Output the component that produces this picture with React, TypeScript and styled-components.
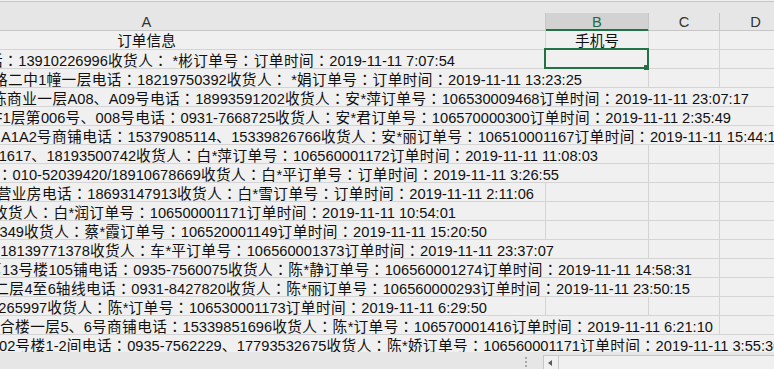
import React from "react";
import styled, { createGlobalStyle, css } from "styled-components";

const GlobalStyle = createGlobalStyle`
  html, body { margin: 0; padding: 0; background: #f0f0f0; }
  body { font-family: "Liberation Sans", "Noto Sans CJK SC", sans-serif; }
`;

const SHIFT = 252;
const COLS = "798px 103px 71px 72px 100px";
const GRID_LINE = "#d4d4d4";
const HEAD_LINE = "#c6c6c6";
const GREEN = "#217346";

const Window = styled.div`
  width: 774px;
  height: 369px;
  overflow: hidden;
  display: flex;
  flex-direction: column;
  background: #f0f0f0;
`;

const TopStrip = styled.div`
  flex: none;
  height: 11px;
  margin-top: 1px;
  border-top: 1px solid ${HEAD_LINE};
  background: #e6e6e6;
`;

const Grid = styled.div`
  display: grid;
  grid-template-columns: ${COLS};
  width: 1144px;
  margin-left: -${SHIFT}px;
`;

const ColHeaderRow = styled(Grid)`
  flex: none;
  height: 18px;
  background: #e6e6e6;
`;

const ColHeader = styled.div<{ $active?: boolean }>`
  box-sizing: border-box;
  height: 18px;
  border-right: 1px solid ${HEAD_LINE};
  border-bottom: 1px solid ${HEAD_LINE};
  display: flex;
  align-items: center;
  justify-content: center;
  font-size: 14.67px;
  line-height: 16px;
  padding-top: 1px;
  color: #333;
  ${(p) =>
    p.$active &&
    css`
      background: #d2d2d2;
      color: #1e6b41;
      border-bottom-color: ${GREEN};
      box-shadow: inset 0 -1px 0 ${GREEN};
    `}
`;

const Body = styled.div`
  flex: 1;
  min-height: 0;
  overflow: hidden;
`;

const Row = styled(Grid)`
  height: 19px;
`;

const Cell = styled.div<{ $span?: number; $selected?: boolean }>`
  box-sizing: border-box;
  height: 19px;
  border-right: 1px solid ${GRID_LINE};
  border-bottom: 1px solid ${GRID_LINE};
  grid-column: span ${(p) => p.$span ?? 1};
  ${(p) =>
    p.$selected &&
    css`
      position: relative;
    `}
`;

const TextCell = styled(Cell)`
  overflow: hidden;
  font-size: 14.67px;
  line-height: 16px;
  padding-top: 2px;
  color: #111;
`;

const TitleCell = styled(TextCell)`
  display: flex;
  justify-content: center;
  white-space: nowrap;
`;

const Overflow = styled.div<{ $end?: number; $start?: number }>`
  display: flex;
  white-space: nowrap;
  ${(p) =>
    p.$start !== undefined
      ? css`
          justify-content: flex-start;
          padding-left: ${p.$start + SHIFT}px;
        `
      : css`
          justify-content: flex-end;
          width: ${(p.$end ?? 0) + SHIFT}px;
        `}
`;

const Han = styled.span`
  letter-spacing: 0.45px;
`;

const Colon = styled.span`
  font-family: "Noto Sans CJK JP", "Noto Sans CJK SC", sans-serif;
  letter-spacing: 0.45px;
`;

const Selection = styled.div`
  position: absolute;
  left: -2px;
  top: -2px;
  right: -1px;
  bottom: -1px;
  border: 2px solid ${GREEN};
  z-index: 2;
  pointer-events: none;
`;

const FillHandle = styled.div`
  position: absolute;
  right: -2px;
  bottom: -3px;
  width: 5px;
  height: 5px;
  background: ${GREEN};
`;

const BottomBar = styled.div`
  flex: none;
  height: 17px;
  box-sizing: border-box;
  padding-top: 3px;
  background: #e6e6e6;
  display: flex;
  align-items: flex-start;
`;

const TabsArea = styled.div`
  flex: none;
  width: 525px;
`;

const Grip = styled.div`
  flex: none;
  width: 0;
  height: 10px;
  margin-top: 2px;
  border-left: 2px dotted #a8a8a8;
  margin-right: 16px;
`;

const HScroll = styled.div`
  flex: 1;
  height: 14px;
  display: flex;
  border-top: 1px solid ${HEAD_LINE};
  border-left: 1px solid ${HEAD_LINE};
  background: #f0f0f0;
`;

const ScrollButton = styled.div`
  flex: none;
  width: 14px;
  border-right: 1px solid ${HEAD_LINE};
  display: flex;
  align-items: center;
  justify-content: center;
`;

const ArrowLeft = styled.div`
  width: 0;
  height: 0;
  border-top: 3.5px solid transparent;
  border-bottom: 3.5px solid transparent;
  border-right: 4px solid #5a5a5a;
  margin-right: 2px;
`;

type RowData = { text: string; span: number; end?: number; start?: number };

const rows: RowData[] = [
  { text: "电话：13910226996收货人： *彬订单号：订单时间：2019-11-11 7:07:54", end: 455, span: 1 },
  { text: "路二中1幢一层电话：18219750392收货人： *娟订单号：订单时间：2019-11-11 13:23:25", end: 582, span: 2 },
  { text: "栋商业一层A08、A09号电话：18993591202收货人：安*萍订单号：106530009468订单时间：2019-11-11 23:07:17", end: 749, span: 4 },
  { text: "F1层第006号、008号电话：0931-7668725收货人：安*君订单号：106570000300订单时间：2019-11-11 2:35:49", end: 731, span: 4 },
  { text: "A1A2号商铺电话：15379085114、15339826766收货人：安*丽订单号：106510001167订单时间：2019-11-11 15:44:16", start: 1, span: 5 },
  { text: "1617、18193500742收货人：白*萍订单号：106560001172订单时间：2019-11-11 11:08:03", end: 598, span: 2 },
  { text: "话：010-52039420/18910678669收货人：白*平订单号：订单时间：2019-11-11 3:26:55", end: 559, span: 2 },
  { text: "营业房电话：18693147913收货人：白*雪订单号：订单时间：2019-11-11 2:11:06", end: 534, span: 1 },
  { text: "6收货人：白*润订单号：106500001171订单时间：2019-11-11 10:54:01", end: 456, span: 1 },
  { text: "1349收货人：蔡*霞订单号：106520001149订单时间：2019-11-11 15:20:50", end: 487, span: 1 },
  { text: "话：18139771378收货人：车*平订单号：106560001373订单时间：2019-11-11 23:37:07", end: 554, span: 2 },
  { text: "第13号楼105铺电话：0935-7560075收货人：陈*静订单号：106560001274订单时间：2019-11-11 14:58:31", end: 692, span: 3 },
  { text: "楼二层4至6轴线电话：0931-8427820收货人：陈*丽订单号：106560000293订单时间：2019-11-11 23:50:15", end: 690, span: 3 },
  { text: "7265997收货人：陈*订单号：106530001173订单时间：2019-11-11 6:29:50", end: 487, span: 1 },
  { text: "综合楼一层5、6号商铺电话：15339851696收货人：陈*订单号：106570001416订单时间：2019-11-11 6:21:10", end: 713, span: 3 },
  { text: "02号楼1-2间电话：0935-7562229、17793532675收货人：陈*娇订单号：106560001171订单时间：2019-11-11 3:55:30", start: -1, span: 5 },
];

const HEADERS = ["A", "B", "C", "D", ""];

function CellText({ text }: { text: string }) {
  const parts = text.split(/(：|[\u3001-\u303f\u4e00-\u9fff]+)/).filter((s) => s !== "");
  return (
    <>
      {parts.map((s, i) =>
        s === "：" ? (
          <Colon key={i}>{s}</Colon>
        ) : /[\u3001-\u303f\u4e00-\u9fff]/.test(s) ? (
          <Han key={i}>{s}</Han>
        ) : (
          <React.Fragment key={i}>{s}</React.Fragment>
        )
      )}
    </>
  );
}

export default function App() {
  return (
    <>
      <GlobalStyle />
      <Window>
        <TopStrip />
        <ColHeaderRow>
          {HEADERS.map((l, i) => (
            <ColHeader key={i} $active={l === "B"}>
              {l}
            </ColHeader>
          ))}
        </ColHeaderRow>
        <Body>
          <Row>
            <TitleCell>订单信息</TitleCell>
            <TitleCell>手机号</TitleCell>
            <Cell />
            <Cell />
            <Cell />
          </Row>
          {rows.map((r, i) => (
            <Row key={i}>
              <TextCell $span={r.span}>
                <Overflow $end={r.end} $start={r.start}>
                  <span>
                    <CellText text={r.text} />
                  </span>
                </Overflow>
              </TextCell>
              {Array.from({ length: 5 - r.span }, (_, j) => {
                const col = r.span + j;
                const selected = i === 0 && col === 1;
                return (
                  <Cell key={j} $selected={selected}>
                    {selected && (
                      <Selection>
                        <FillHandle />
                      </Selection>
                    )}
                  </Cell>
                );
              })}
            </Row>
          ))}
        </Body>
        <BottomBar>
          <TabsArea />
          <Grip />
          <HScroll>
            <ScrollButton>
              <ArrowLeft />
            </ScrollButton>
          </HScroll>
        </BottomBar>
      </Window>
    </>
  );
}
